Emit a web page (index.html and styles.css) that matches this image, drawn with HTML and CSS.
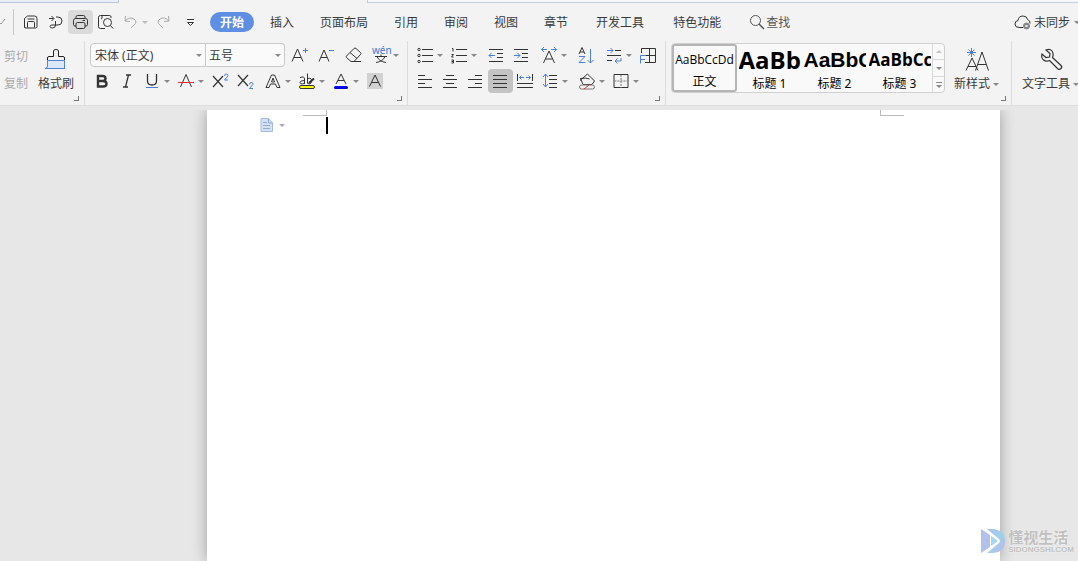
FILE: index.html
```html
<!DOCTYPE html>
<html lang="zh-CN">
<head>
<meta charset="utf-8">
<title>文字</title>
<link rel="stylesheet" href="styles.css">
</head>
<body>
<header class="ribbon">
  <div class="tabstrip"><span class="doc-tab"></span><span class="doc-tab-active"></span><span class="strip-rest"></span></div>

  <div class="menubar">
    <div class="quick">
      <button class="file-more" aria-label="文件"><svg width="6" height="8" viewBox="0 0 6 8"><path d="M-2 3 1 6 5 1" stroke="#999"/></svg></button>
      <button class="tool" aria-label="保存"><svg viewBox="0 0 24 24"><path d="M6.500 17.500V8.500l3-2.500h7q2.500 0 2.500 2.500v8q0 1.500-1.500 1.500H8q-1.500 0-1.500-1.500zM9.500 17.500V12.500q0-1 1-1h5q1 0 1 1v5M9.500 9h7"/></svg></button>
      <button class="tool" aria-label="输出"><svg viewBox="0 0 24 24"><path d="M6 8.500h4.500M8.500 6l2.500 2.500L8.500 11M13 7h2q4 0 4 4t-4 4H9q-2 0-2 1.500T9.500 18q3 0 3-3v-4"/></svg></button>
      <button class="tool active-light" aria-label="打印"><svg viewBox="0 0 24 24"><path d="M8 8.500V7q0-1.500 1.500-1.500h6Q17 5.500 17 7v1.500M8 16H7q-1.500 0-1.500-1.500v-4q0-2 2-2h10q2 0 2 2v4Q19.500 16 18 16h-1M9.500 12.500h6q1.500 0 1.500 1.500v3q0 1.500-1.500 1.500h-6Q8 18.500 8 17v-3q0-1.500 1.500-1.500zM14.500 10.500H17"/></svg></button>
      <button class="tool" aria-label="打印预览"><svg viewBox="0 0 24 24"><path d="M18 8V7q0-1.500-1.500-1.500h-9q-2 0-2 2v9q0 2 2 2H12M9 5.500V8q0 1-1 1"/><circle cx="14.500" cy="12.500" r="4"/><path d="M17.500 15.500l2.500 3"/></svg></button>
      <button class="tool drop faint" aria-label="撤销"><svg viewBox="0 0 24 24"><path d="M7.500 6 7 11l5 .5M7 11q5-5 9-2t0 6l-3 3"/></svg><i></i></button>
      <button class="tool faint redo" aria-label="恢复"><svg viewBox="0 0 24 24"><path d="M17.500 6l.5 5-5 .5M18 11q-5-5-9-2t0 6l3 3"/></svg></button>
      <button class="tool" aria-label="自定义快速访问工具栏"><svg viewBox="0 0 24 24"><path d="M9 9.500h7M9.500 12.500l3 3 3-3z"/></svg></button>
    </div>
    <nav class="tabs">
      <button class="tab current">开始</button>
      <button class="tab">插入</button>
      <button class="tab">页面布局</button>
      <button class="tab">引用</button>
      <button class="tab">审阅</button>
      <button class="tab">视图</button>
      <button class="tab">章节</button>
      <button class="tab wide">开发工具</button>
      <button class="tab wide">特色功能</button>
    </nav>
    <button class="search"><svg width="16" height="16" viewBox="0 0 16 16"><circle cx="6.500" cy="6.500" r="5"/><path d="M10 10l5 5" stroke-width="1.500"/></svg><span>查找</span></button>
    <button class="sync"><svg width="18" height="16" viewBox="0 0 18 16"><path d="M9 13.500H5Q1 13.500 1 10q0-3 3-3.500Q4.500 2 9 2q4 0 4.500 3.500 3 1 2.500 4"/><circle cx="12.500" cy="12" r="3" fill="#888" stroke="#888"/><path d="M11.500 11l2 2m0-2-2 2" stroke="#fff"/></svg><span>未同步</span><i></i></button>
  </div>

  <div class="tools">
    <section class="group clipboard">
      <div class="stack"><button>剪切</button><button>复制</button></div>
      <button class="big"><svg width="24" height="26" viewBox="0 0 24 26"><path d="M3 14.500h18v8H3z" fill="#dce8fa" stroke="none"/><path d="M3.500 14.500V12q0-1.500 1.500-1.500h4.500V5Q9.500 3.500 12 3.500T14.500 5v5.500H19q1.500 0 1.500 1.500v2.500" stroke="#222"/><path d="M3.500 14.500h17v8M3.500 14.500v5.500q0 2.500-2.500 2.500h20" stroke="#4f82d0"/></svg><span>格式刷</span></button>
      <button class="launcher" aria-label="剪贴板设置"></button>
    </section>

    <section class="group font">
      <div class="row font-top">
        <div class="combo face"><select aria-label="字体"><option>宋体 (正文)</option></select><i></i></div>
        <div class="combo size"><select aria-label="字号"><option>五号</option></select><i></i></div>
        <div class="row font-size">
          <button class="tool" aria-label="增大字号"><svg viewBox="0 0 24 24"><path d="M4 18.500 9.500 6 15 18.500M6 14.500h7"/><path class="blue" d="M15 7.500h5M17.500 5v5"/></svg></button>
          <button class="tool" aria-label="减小字号"><svg viewBox="0 0 24 24"><path d="M4 18.500 9 7l5 11.500M6 14.500h6"/><path class="blue" d="M14 7.500h5"/></svg></button>
          <button class="tool" aria-label="清除格式"><svg viewBox="0 0 24 24"><path d="M4.500 13 12 5.500q1-1 2 0l4.500 4q1 1 0 2L12 18.500H9L4.500 14.500q-.8-.7 0-1.500zM8 9.500l7 6M12 18.500h7"/></svg></button>
          <button class="tool drop" aria-label="拼音指南"><svg viewBox="0 0 24 24"><text x="3" y="11" class="blue-text">wén</text><path d="M6 13.500h12M12 11.500v2M8 13.500q2 5 9 6M16 13.500q-2 5-9 6"/></svg><i></i></button>
        </div>
      </div>
      <div class="row">
        <button class="tool" aria-label="加粗"><svg viewBox="0 0 24 24"><path stroke-width="2.400" d="M8 7h4.500q3 0 3 2.500t-3 2.500H8zM8 12h5q3.500 0 3.500 2.700T13 17.500H8z"/></svg></button>
        <button class="tool" aria-label="倾斜"><svg viewBox="0 0 24 24"><path stroke-width="1.300" d="M11 6h5M8 18h5M13.500 6l-3 12"/></svg></button>
        <button class="tool drop" aria-label="下划线"><svg viewBox="0 0 24 24"><path stroke-width="1.300" d="M7.500 5v7q0 4 4.500 4t4.500-4V5"/><path class="blue" d="M6 18.500h12"/></svg><i></i></button>
        <button class="tool drop" aria-label="删除线"><svg viewBox="0 0 24 24"><path d="M6.500 18 12 5.500 17.500 18"/><path stroke="#d33" d="M4 13.500h16"/></svg><i></i></button>
        <button class="tool" aria-label="上标"><svg viewBox="0 0 24 24"><path stroke-width="1.200" d="M5 7l10 11M15 7 5 18"/><path class="blue" d="M16.500 7q0-2 1.800-2T20 6.800L16.500 11H20"/></svg></button>
        <button class="tool" aria-label="下标"><svg viewBox="0 0 24 24"><path stroke-width="1.200" d="M5 6l10 11M15 6 5 17"/><path class="blue" d="M16.500 15.500q0-2 1.800-2t1.700 1.800l-3.500 4.200H20"/></svg></button>
        <button class="tool drop spaced" aria-label="文字效果"><svg viewBox="0 0 24 24"><path d="M5 18.500 10.500 6h3L19 18.500h-3L14.500 15h-5L8 18.500zM10.500 13h3l-1.500-4z"/></svg><i></i></button>
        <button class="tool drop" aria-label="突出显示"><svg viewBox="0 0 24 24"><path d="M5 8.500q4.500-1.500 4.500 1.500v5m0-3.500q-4.500 0-4.500 2t4.500 1M12.500 4.500v10m0-5q5-1 4 3t-4 1.500"/><path d="M14 14l5-4.500" stroke-width="2"/><rect x="4.500" y="16.500" width="15" height="3" rx="1.500" fill="#ff0"/></svg><i></i></button>
        <button class="tool drop" aria-label="字体颜色"><svg viewBox="0 0 24 24"><path d="M7 15 12 5l5 10M9 11.500h6"/><path d="M6.500 18.500h11" stroke="#0000e6" stroke-width="3" stroke-linecap="round"/></svg><i></i></button>
        <button class="tool" aria-label="字符底纹"><svg viewBox="0 0 24 24"><path d="M4 4h16v16H4z" fill="#d2d2d2" stroke="none"/><path d="M6.500 17.500 12 6l5.500 11.500M8.500 13.500h7"/></svg></button>
      </div>
      <button class="launcher" aria-label="字体设置"></button>
    </section>

    <section class="group paragraph">
      <div class="row">
        <button class="tool drop" aria-label="项目符号"><svg viewBox="0 0 24 24"><path d="M9 6.500h11M9 12.500h11M9 18.500h11"/><g><circle cx="6" cy="6.500" r="1.200"/><circle cx="6" cy="12.500" r="1.200"/><circle cx="6" cy="18.500" r="1.200"/></g></svg><i></i></button>
        <button class="tool drop" aria-label="编号"><svg viewBox="0 0 24 24"><path d="M9 6.500h11M9 12.500h11M9 18.500h11M5 5.500h1v3M4.500 11.500h2l-2 2.500h2M4.500 17h2v3h-2m0-1.500h2"/></svg><i></i></button>
        <button class="tool spaced" aria-label="减少缩进"><svg viewBox="0 0 24 24"><path d="M5 6.500h14M13 10.500h6M13 14.500h6M5 18.500h14"/><path class="blue" d="M11 12.500H5m2.500-2.500L5 12.500 7.500 15"/></svg></button>
        <button class="tool" aria-label="增加缩进"><svg viewBox="0 0 24 24"><path d="M5 6.500h14M13 10.500h6M13 14.500h6M5 18.500h14"/><path class="blue" d="M5 12.500h6M8.500 10l2.500 2.500L8.500 15"/></svg></button>
        <button class="tool drop spaced" aria-label="字符缩放"><svg viewBox="0 0 24 24"><path d="M6.500 20 12 8l5.500 12M8.500 16h7"/><path class="blue" d="M10 6.500H4.500M7 4 4.500 6.500 7 9M14 6.500h5.500M17 4l2.500 2.500L17 9"/></svg><i></i></button>
        <button class="tool spaced" aria-label="排序"><svg viewBox="0 0 24 24"><path d="M5 11 8 4.500 11 11M6 9h4"/><path class="blue" d="M5 13.500h6l-6 6h6.500M16.500 6v14M13.500 17l3 3 3-3"/></svg></button>
        <button class="tool drop spaced" aria-label="制表符"><svg viewBox="0 0 24 24"><path d="M13 7.500h6M5 12.500h14M5 17.500h5"/><path class="blue" d="M5 7.500h6M8.500 5 11 7.500 8.500 10M19 15v3h-6m2.500-2.500L13 18l2.500 2.500"/></svg><i></i></button>
        <button class="tool" aria-label="文字排列"><svg viewBox="0 0 24 24"><path d="M5.500 10V5.500h14v14H9M9 12.500h10.500M13.500 5.500v14"/><path class="blue" d="M10 12.500H4.500v8M4.500 16.500H9"/></svg></button>
      </div>
      <div class="row">
        <button class="tool" aria-label="左对齐"><svg viewBox="0 0 24 24"><path d="M5 6.500h7M5 10.500h14M5 14.500h7M5 18.500h14"/></svg></button>
        <button class="tool" aria-label="居中"><svg viewBox="0 0 24 24"><path d="M8 6.500h8M5 10.500h14M8 14.500h8M5 18.500h14"/></svg></button>
        <button class="tool" aria-label="右对齐"><svg viewBox="0 0 24 24"><path d="M12 6.500h7M5 10.500h14M12 14.500h7M5 18.500h14"/></svg></button>
        <button class="tool active" aria-label="两端对齐"><svg viewBox="0 0 24 24"><path d="M5 6.500h14M5 10.500h14M5 14.500h14M5 18.500h14"/></svg></button>
        <button class="tool" aria-label="分散对齐"><svg viewBox="0 0 24 24"><path d="M4.500 5v7M19.500 5v7M4 14.500h16M4 18.500h16"/><path class="blue" d="M11 8.500H6.500m2-2-2 2 2 2M13 8.500h4.500m-2-2 2 2-2 2"/></svg></button>
        <button class="tool drop" aria-label="行距"><svg viewBox="0 0 24 24"><path d="M11 6.500h8M11 10.500h8M11 14.500h8M11 18.500h8"/><path class="blue" d="M7.500 5v13M5 8l2.500-3L10 8M5 15l2.500 3 2.500-3"/></svg><i></i></button>
        <button class="tool drop spaced" aria-label="底纹颜色"><svg viewBox="0 0 24 24"><path d="M5 11.500 12.500 5 19.500 12l-2.500 3.500H8L5.500 9.500q6-1 9 .5"/><rect x="4.500" y="16" width="15" height="4" rx="2" stroke="#777"/><path d="M9 20l5-4" stroke="#d33"/></svg><i></i></button>
        <button class="tool drop" aria-label="边框"><svg viewBox="0 0 24 24"><path d="M5 5.500h14v13H5z"/><path d="M12 6v13M5.500 12H19" stroke-dasharray="2 1" stroke="#777"/></svg><i></i></button>
      </div>
      <button class="launcher" aria-label="段落设置"></button>
    </section>

    <section class="group styles">
      <div class="gallery">
        <button class="style chosen"><span class="sample">AaBbCcDd</span><span>正文</span></button>
        <button class="style"><span class="sample h1">AaBb</span><span>标题 1</span></button>
        <button class="style"><span class="sample h2">AaBbC</span><span>标题 2</span></button>
        <button class="style"><span class="sample h3">AaBbCc</span><span>标题 3</span></button>
        <div class="scroller">
          <button aria-label="上一行"><i class="up"></i></button>
          <button aria-label="下一行"><i></i></button>
          <button aria-label="更多样式"><b></b><i></i></button>
        </div>
      </div>
      <button class="big new-style"><svg width="28" height="26" viewBox="0 0 28 26"><path d="M3 24.500 9 12l6 12.500M5 20.500h8M12.500 24.500 19 6l6.500 18.500M15 18.500h8"/><path class="blue" d="M8.500 2v9M4 6.500h9M5.500 3.500l6 6M11.500 3.500l-6 6"/></svg><span>新样式<i></i></span></button>
      <button class="launcher" aria-label="样式设置"></button>
    </section>

    <section class="group text-tools">
      <button class="big"><svg width="26" height="26" viewBox="0 0 26 26"><path d="M8 4l4 3.500-.5 3.500L8 11.500 4 8q-1 4 1.500 6t6 .5l8.500 8.500q1.500 1 3-.5t0-3L14.500 11.500q1.500-4-.5-6.500T8 4z" stroke="#333" stroke-width="1.200"/></svg><span>文字工具<i></i></span></button>
    </section>
  </div>
</header>

<main class="workspace">
  <article class="page">
    <div class="margins"><span class="corner left"></span><span class="corner right"></span></div>
    <div class="line">
      <button class="para-menu" aria-label="段落布局"><svg width="14" height="16" viewBox="0 0 14 16"><path d="M1 1.500h7.500L12.500 6v8.500H1z" fill="#d5e0f2" stroke="#a5b9de"/><path d="M8.500 1.500V6h4M3 5.500h4M3 8.500h7M3 11.500h7" stroke="#8fa9d8"/></svg><i></i></button>
      <span class="caret"></span>
    </div>
  </article>
  <div class="watermark">
    <svg width="28" height="28" viewBox="0 0 28 28"><defs><linearGradient id="wm" x1="0" y1="0" x2="1" y2="1"><stop offset="0" stop-color="#a9c1ee"/><stop offset=".5" stop-color="#9bd3ed"/><stop offset="1" stop-color="#c6b2e6"/></linearGradient></defs><path d="M1 2 10 8v12l-9 6z" fill="#b1c1ec" stroke="none"/><path d="M7 2h6q12 1 12 12T13 26H7l12-10q2-2 0-4z" fill="url(#wm)" stroke="none"/><path d="M11 9l7 5-7 5z" fill="#a5d8ee" stroke="none"/></svg>
    <div><strong>懂视生活</strong><small>SIDONGSHI.COM</small></div>
  </div>
</main>
</body>
</html>
```
FILE: styles.css
```css
* { box-sizing: border-box; }
body {
  margin: 0;
  min-height: 100vh;
  display: flex;
  flex-direction: column;
  overflow: hidden;
  font: 12px/16px "Noto Sans", "Noto Sans CJK SC", sans-serif;
  color: #3a3a3a;
}
button, select { font: inherit; color: inherit; border: 0; padding: 0; margin: 0; background: none; white-space: nowrap; }
svg { display: block; flex: none; fill: none; stroke: #333; stroke-width: 1; }
.blue { stroke: #4b7fd3; }
.blue-text { font: 10px/10px "Noto Sans", sans-serif; fill: #3f78d0; stroke: none; }
i { flex: none; width: 0; height: 0; border: 3px solid transparent; border-top-color: #888; border-bottom-width: 0; }
i.up { border-top-width: 0; border-bottom: 3px solid #c4c4c4; }

.ribbon { background: #f3f3f3; border-bottom: 1px solid #dedede; }
.tabstrip { display: flex; height: 3px; }
.doc-tab { width: 119px; background: #e8eefa; border: solid #b9c6de; border-width: 0 1px 1px 0; }
.doc-tab-active { width: 248px; }
.strip-rest { flex: 1; background: #f6f7fa; border: solid #c3cbd8; border-width: 0 0 1px 1px; }

.menubar { display: flex; align-items: center; height: 38px; }
.quick { display: flex; align-items: center; width: 207px; }
.file-more { width: 14px; height: 26px; margin-right: 4px; border-right: 1px solid #c8c8c8; }
.tool { display: flex; align-items: center; width: 25px; height: 24px; flex: none; border-radius: 4px; }
.tool svg { width: 24px; height: 24px; }
.tool.drop { width: 34px; }
.tool.spaced { margin-left: 3px; }
.active-light { background: #dadada; }
.active { background: #c4c4c4; }
.faint svg { stroke: #aaa; }
.faint i { border-top-color: #bbb; }
.redo { margin-right: 2px; }
.quick .drop { width: 33px; }
.tabs { display: flex; gap: 3px; margin-left: 3px; }
.tab { height: 20px; min-width: 47px; padding: 2px 10px 0 13px; }
.tab.wide { padding: 2px 11px 0 15px; }
.tab.current { min-width: 44px; padding: 1px 10px 0; border-radius: 10px; background: #5f8fe5; color: #fff; font-weight: bold; }
.search { display: flex; align-items: center; gap: 1px; margin-left: 17px; color: #555; }
.search span, .sync span { padding-top: 2px; }
.search svg { stroke: #555; }
.sync { display: flex; align-items: center; gap: 2px; margin-left: auto; }
.sync i { margin-left: 2px; margin-right: -2px; }

.tools { display: flex; height: 64px; }
.group { position: relative; flex: none; border-right: 1px solid #dcdcdc; }
.row { display: flex; align-items: center; }
.launcher { position: absolute; right: 5px; bottom: 4px; width: 5px; height: 5px; border: solid #777; border-width: 0 1px 1px 0; }
.clipboard { display: flex; width: 85px; }
.stack { display: grid; grid-template-rows: 27px 27px; width: 34px; padding-top: 2px; color: #aaa; }
.stack button { padding-right: 2px; }
.big { display: flex; flex-direction: column; align-items: center; gap: 4px; height: 53px; padding-top: 5px; }
.big span { display: flex; align-items: center; gap: 3px; }
.clipboard .big { width: 44px; }
.font { width: 323px; padding: 2px 0 0 5px; }
.paragraph { width: 258px; padding: 2px 0 0 5px; }
.font .row + .row, .paragraph .row + .row { margin-top: 2px; }
.combo { display: flex; align-items: center; height: 24px; padding-right: 3px; background: #fafafa; border: 1px solid #c9c9c9; }
.combo select { flex: 1; min-width: 0; height: 22px; padding: 2px 0 0 4px; appearance: none; }
.face { width: 116px; border-radius: 4px 0 0 4px; }
.size { width: 79px; border-left: 0; border-radius: 0 4px 4px 0; }
.size select { padding-left: 3px; }
.font .font-size { gap: 2px; margin: 0 0 0 3px; }

.styles { display: flex; width: 346px; padding: 2px 0 0 5px; }
.gallery { display: flex; width: 274px; height: 50px; background: #f9f9f9; border: 1px solid #d0d0d0; border-radius: 4px; }
.style { width: 65px; height: 48px; display: grid; grid-template-rows: 32px 16px; align-items: center; justify-items: center; overflow: hidden; color: #000; }
.chosen { border: 2px solid #b5b5b5; border-radius: 3px; }
.style.chosen { grid-template-rows: 28px 16px; }
.sample { font: 12px/24px "Open Sans", sans-serif; }
.style .h1, .style .h2, .style .h3 { width: 62px; overflow: hidden; text-align: left; font-weight: bold; white-space: nowrap; }
.h1 { font-size: 24px; }
.style .h2 { font-family: "Liberation Sans", sans-serif; font-size: 21px; }
.h3 { font-size: 17px; }
.scroller { display: grid; grid-template-rows: 16px 17px 15px; flex: 1; }
.scroller button { display: flex; flex-direction: column; align-items: center; justify-content: center; gap: 2px; border: solid #d8d8d8; border-width: 0 0 1px 1px; }
.scroller button:last-child { border-bottom: 0; }
.scroller b { width: 6px; height: 1px; background: #888; }
.new-style { margin-left: 9px; padding-top: 3px; height: 51px; }
.text-tools { flex: 1; padding-left: 10px; border: 0; }

.workspace { position: relative; flex: 1; display: flex; padding: 4px 78px 0 207px; background: #e7e7e7; }
.page { flex: 1; background: #fff; box-shadow: 0 0 14px rgba(0, 0, 0, .32); clip-path: inset(0 -20px 0 -20px); }
.margins { display: flex; justify-content: space-between; padding: 0 96px; }
.corner { width: 24px; height: 6px; border: 0 solid #bbb; border-bottom-width: 1px; }
.corner.left { border-right-width: 1px; }
.corner.right { border-left-width: 1px; }
.line { display: flex; align-items: center; height: 18px; padding-left: 53px; }
.para-menu { display: flex; align-items: center; gap: 5px; width: 66px; }
.para-menu i { border-top-color: #aaa; }
.caret { width: 2px; height: 17px; background: #000; }
.watermark { position: absolute; right: 4px; bottom: 6px; display: flex; align-items: center; color: #c0c0c0; text-shadow: 0 0 2px #fff; }
.watermark strong, .watermark small { display: block; }
.watermark strong { font-size: 15px; line-height: 18px; }
.watermark small { font: bold 8px/8px "Liberation Sans", sans-serif; }
```
